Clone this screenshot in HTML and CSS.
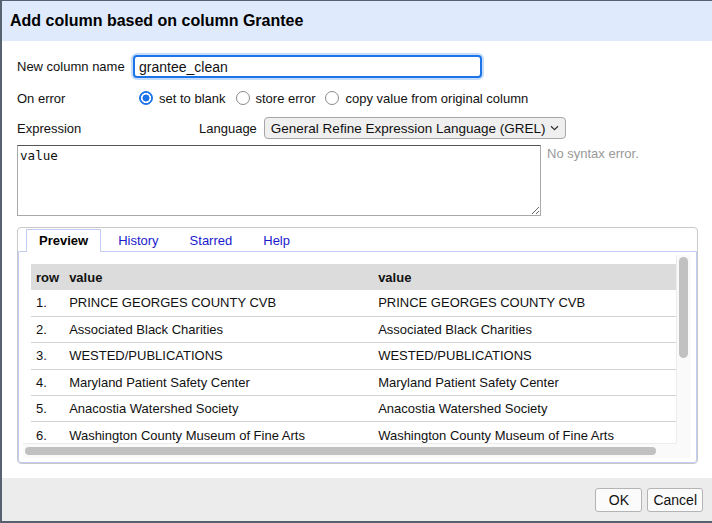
FILE: index.html
```html
<!DOCTYPE html>
<html>
<head>
<meta charset="utf-8">
<link rel="stylesheet" href="styles.css">
</head>
<body>
<div class="dialog">
  <div class="dialog-header">Add column based on column Grantee</div>
  <div class="dialog-body">
    <div class="row row-name">
      <label class="label">New column name</label>
      <input class="text-input" type="text" value="grantee_clean">
    </div>
    <div class="row row-error">
      <span class="label">On error</span>
      <div class="radios">
        <span class="radio checked"></span><span class="radio-label">set to blank</span>
        <span class="radio"></span><span class="radio-label">store error</span>
        <span class="radio"></span><span class="radio-label">copy value from original column</span>
      </div>
    </div>
    <div class="row row-expr">
      <span class="label label-expr">Expression</span>
      <span class="lang-label">Language</span>
      <div class="select">General Refine Expression Language (GREL)<svg class="chev" width="9" height="6" viewBox="0 0 9 6"><path d="M1 1.2 L4.5 4.6 L8 1.2" fill="none" stroke="#333" stroke-width="1.3"/></svg></div>
    </div>
    <div class="row row-textarea">
      <textarea class="expr">value</textarea>
      <span class="status">No syntax error.</span>
    </div>
    <div class="tabs">
      <div class="tab-nav">
        <span class="tab active">Preview</span>
        <span class="tab">History</span>
        <span class="tab">Starred</span>
        <span class="tab">Help</span>
      </div>
      <div class="panel">
        <div class="scrollbox">
          <div class="viewport">
            <table class="preview">
              <thead>
                <tr><th class="c-row">row</th><th class="c-val">value</th><th>value</th></tr>
              </thead>
              <tbody>
                <tr><td>1.</td><td>PRINCE GEORGES COUNTY CVB</td><td>PRINCE GEORGES COUNTY CVB</td></tr>
                <tr><td>2.</td><td>Associated Black Charities</td><td>Associated Black Charities</td></tr>
                <tr><td>3.</td><td>WESTED/PUBLICATIONS</td><td>WESTED/PUBLICATIONS</td></tr>
                <tr><td>4.</td><td>Maryland Patient Safety Center</td><td>Maryland Patient Safety Center</td></tr>
                <tr><td>5.</td><td>Anacostia Watershed Society</td><td>Anacostia Watershed Society</td></tr>
                <tr><td>6.</td><td>Washington County Museum of Fine Arts</td><td>Washington County Museum of Fine Arts</td></tr>
              </tbody>
            </table>
          </div>
          <div class="vbar"><div class="vthumb"></div></div>
          <div class="hbar"><div class="hthumb"></div></div>
          <div class="corner"></div>
        </div>
      </div>
    </div>
  </div>
  <div class="dialog-footer">
    <button class="btn btn-ok">OK</button>
    <button class="btn">Cancel</button>
  </div>
</div>
</body>
</html>
```

FILE: styles.css
```css
* { box-sizing: border-box; }
html, body { margin: 0; padding: 0; background: #fff; }
body {
  font-family: "Liberation Sans", Arial, sans-serif;
  font-size: 13px;
  color: #111;
}
.dialog {
  width: 712px;
  height: 523px;
  border-top: 1px solid #56626f;
  border-left: 2px solid #56626f;
  border-bottom: 2px solid #56626f;
  display: flex;
  flex-direction: column;
  background: #fff;
}
.dialog-header {
  height: 40px;
  line-height: 40px;
  padding-left: 8px;
  background: #dfeafc;
  font-weight: bold;
  font-size: 16px;
  color: #000;
}
.dialog-body {
  flex: 1;
  padding: 14px 14px 0 15px;
}
.row {
  display: flex;
  align-items: center;
}
.label {
  width: 116px;
  flex: none;
}
.row-name { height: 23px; }
.text-input {
  width: 349px;
  height: 23px;
  border: 2px solid #1c74e8;
  border-radius: 4px;
  box-shadow: 0 0 0 2px #c5dcfb;
  padding: 0 4px;
  font-family: "Liberation Sans", Arial, sans-serif;
  font-size: 14px;
  color: #111;
  outline: none;
}
.row-error { height: 22px; margin-top: 9px; }
.radios { display: flex; align-items: center; }
.radio {
  width: 14px;
  height: 14px;
  border-radius: 50%;
  border: 1px solid #8a8a8a;
  background: #fff;
  margin-left: 10px;
  flex: none;
}
.radio:first-child { margin-left: 6px; }
.radio.checked {
  border: 1px solid #1a73e8;
  background: radial-gradient(circle, #1a73e8 0 3.2px, #fff 3.8px 4.8px, #1a73e8 5.3px);
}
.radio-label { margin-left: 6px; }
.row-expr { height: 22px; margin-top: 8px; }
.label-expr { width: 182px; }
.lang-label { margin-right: 7px; }
.select {
  width: 302px;
  height: 22px;
  border: 1px solid #a6a6a6;
  border-radius: 4px;
  background: #efefef;
  font-size: 13.5px;
  padding-left: 6px;
  display: flex;
  align-items: center;
  justify-content: space-between;
  padding-right: 6px;
}
.chev { flex: none; }
.row-textarea { align-items: flex-start; margin-top: 6px; }
.expr {
  width: 524px;
  height: 71px;
  border: 1px solid #aaa;
  border-top-color: #555;
  font-family: "DejaVu Sans Mono", monospace;
  font-size: 12.6px;
  padding: 2px 2px;
  resize: both;
  margin: 0;
  color: #111;
}
.status {
  margin-left: 6px;
  margin-top: 1px;
  color: #999;
}
.tabs {
  margin-top: 11px;
  width: 681px;
  height: 237px;
  border: 1px solid #c9c9c9;
  border-radius: 4px;
  display: flex;
  flex-direction: column;
}
.tab-nav {
  display: flex;
  padding: 1px 0 0 8px;
  height: 24px;
  position: relative;
  z-index: 1;
}
.tab {
  height: 23px;
  padding: 0 13px;
  margin-right: 3px;
  line-height: 22px;
  color: #1a1acc;
  border: 1px solid transparent;
  border-bottom: none;
}
.tab.active {
  color: #000;
  font-weight: bold;
  background: #fff;
  border-color: #c2cdf3;
  padding: 0 12px;
}
.panel {
  flex: 1;
  margin-top: -1px;
  border: 1px solid #c2cdf3;
  border-bottom-left-radius: 3px;
  border-bottom-right-radius: 3px;
  padding: 3px 5px 4px 4px;
}
.scrollbox {
  width: 668px;
  height: 203px;
  display: grid;
  grid-template-columns: 653px 15px;
  grid-template-rows: 188px 15px;
}
.viewport {
  overflow: hidden;
  padding: 9px 0 0 8px;
}
.vbar {
  background: #fafafa;
  border-left: 1px solid #ececec;
  padding: 2px 0 0 2px;
}
.vthumb {
  width: 9px;
  height: 101px;
  border-radius: 5px;
  background: #c1c1c1;
}
.hbar {
  background: #fafafa;
  border-top: 1px solid #ececec;
  padding: 3px 0 0 2px;
}
.hthumb {
  width: 631px;
  height: 8px;
  border-radius: 4px;
  background: #c1c1c1;
}
.corner { background: #fafafa; }
.preview {
  width: 666px;
  border-collapse: collapse;
}
.preview th {
  background: #dcdcdc;
  font-weight: bold;
  text-align: left;
  height: 26px;
  padding: 0 5px;
}
.c-row { width: 33px; }
.c-val { width: 309px; }
.preview td {
  height: 26.4px;
  padding: 0 5px;
  border-bottom: 1px solid #d3d3d3;
  white-space: nowrap;
}
.dialog-footer {
  height: 43px;
  background: #ececec;
  display: flex;
  justify-content: flex-end;
  align-items: flex-start;
  padding: 10px 9px 0 0;
  gap: 5px;
}
.btn {
  height: 24px;
  min-width: 47px;
  padding: 0 5px;
  border: 1px solid #b4b4b4;
  border-radius: 3px;
  background: #fbfbfb;
  font-family: "Liberation Sans", Arial, sans-serif;
  font-size: 14px;
  color: #111;
}
```
